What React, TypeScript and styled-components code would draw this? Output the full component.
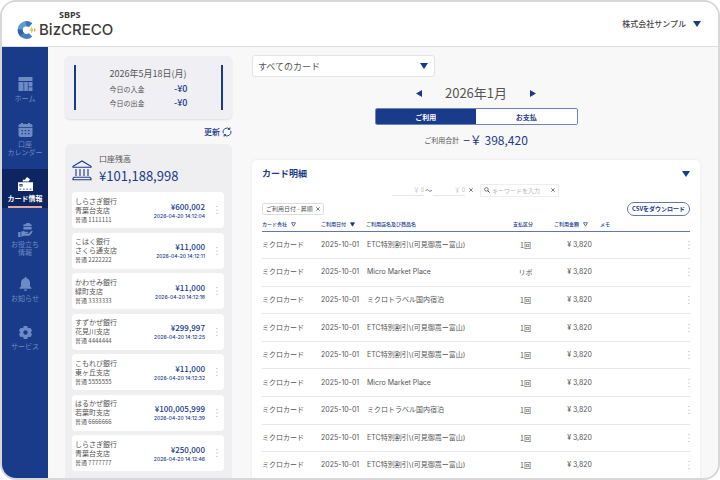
import React from "react";
import styled, { createGlobalStyle, css } from "styled-components";

const navy = "#1a3a8a";
const ink = "#555555";

const GlobalStyle = createGlobalStyle`
  * { box-sizing: border-box; }
  body { margin: 0; background: #ffffff; }
  body, button, input, select, table {
    font-family: "Noto Sans CJK JP", sans-serif;
  }
  button, input, select { margin: 0; padding: 0; border: 0; background: none; color: inherit; }
  button { cursor: pointer; }
  h1, h2, p, dl, dd, ul { margin: 0; padding: 0; }
  ul { list-style: none; }
  svg { display: block; flex: none; }
`;

const Frame = styled.div`
  display: flex;
  flex-direction: column;
  height: 100vh;
  overflow: hidden;
  border: 2px solid #d6d8d9;
  border-radius: 16px;
  background: #f8f8f8;
  color: ${ink};
`;

const Header = styled.header`
  display: flex;
  align-items: center;
  justify-content: space-between;
  flex: none;
  height: 45px;
  padding: 0 17px 0 15px;
  border-bottom: 1px solid #dcdfe0;
  background: #ffffff;
`;

const Brand = styled.a`
  display: grid;
  grid-template-columns: 20px auto;
  column-gap: 2px;
  align-items: center;
  color: #3c3a3b;
  text-decoration: none;
`;

const BrandOwner = styled.span`
  grid-column: 2;
  padding-left: 20px;
  font: 700 9px/12px "Noto Sans", sans-serif;
`;

const BrandName = styled.span`
  font: 500 15px/18px Inter, sans-serif;
`;

const CompanyButton = styled.button`
  display: flex;
  align-items: center;
  gap: 7px;
  font-size: 8px;
  line-height: 12px;
  font-weight: 500;
  color: #444444;
`;

const Body = styled.div`
  display: flex;
  flex: 1;
  min-height: 0;
`;

const Nav = styled.nav`
  display: flex;
  flex-direction: column;
  gap: 7px;
  flex: none;
  width: 46px;
  padding-top: 22px;
  background: ${navy};
`;

const NavLink = styled.a<{ $active?: boolean }>`
  display: flex;
  flex-direction: column;
  align-items: center;
  gap: 3px;
  padding: 8px 0 6px;
  color: #6f8bc6;
  font-size: 7px;
  line-height: 8px;
  text-align: center;
  text-decoration: none;
  white-space: pre-line;
  &:last-child { margin-top: 2px; }
  ${(p) =>
    p.$active &&
    css`
      padding-bottom: 0;
      background: #0d2661;
      color: #ffffff;
      font-weight: 700;
      &::after {
        content: "";
        width: 34px;
        height: 2px;
        margin-top: 1px;
        background: #e3a89b;
      }
    `}
`;

const Side = styled.aside`
  display: flex;
  flex-direction: column;
  flex: none;
  width: 167px;
  margin: 9px 0 0 17px;
`;

const TodayPanel = styled.section`
  padding: 9px;
  border-radius: 5px;
  background: #efeff4;
  box-shadow: 0 1px 2px #dedee2;
`;

const TodayInner = styled.div`
  display: flex;
  justify-content: center;
  border: solid ${navy};
  border-width: 0 2px;
`;

const TodayGrid = styled.dl`
  display: grid;
  grid-template-columns: auto auto;
  justify-content: space-between;
  align-items: center;
  width: 78px;
  font-size: 7px;
  line-height: 14px;
`;

const TodayDate = styled.dt`
  grid-column: 1 / -1;
  font-size: 9px;
  line-height: 17px;
  white-space: nowrap;
`;

const TodayValue = styled.dd`
  color: ${navy};
  font-size: 9px;
  font-weight: 500;
  text-align: right;
`;

const RefreshButton = styled.button`
  display: flex;
  align-items: center;
  align-self: flex-end;
  gap: 2px;
  height: 12px;
  margin: 7px 0 6px;
  color: ${navy};
  font-size: 8px;
  line-height: 12px;
  font-weight: 500;
`;

const BalancePanel = styled.section`
  display: flex;
  flex-direction: column;
  flex: 1;
  min-height: 0;
  padding: 8px 8px 7px 7px;
  border-radius: 5px 5px 0 0;
  background: #efeff2;
`;

const BalanceHead = styled.div`
  display: grid;
  grid-template-columns: 20px 1fr;
  align-items: end;
  column-gap: 7px;
  margin-bottom: 7px;
  > svg { margin-bottom: 4px; }
`;

const BalanceLabel = styled.h2`
  font-size: 8px;
  line-height: 14px;
  font-weight: 400;
`;

const BalanceAmount = styled.p`
  color: ${navy};
  font-size: 13px;
  line-height: 19px;
  font-weight: 400;
`;

const AccountList = styled.ul`
  display: flex;
  flex-direction: column;
  justify-content: space-between;
  flex: 1;
`;

const Account = styled.li`
  display: flex;
  align-items: center;
  height: 36px;
  padding: 0 2px 0 3px;
  border-radius: 4px;
  background: #ffffff;
`;

const AccountName = styled.div`
  flex: 1;
  font-size: 7px;
  line-height: 9px;
  white-space: nowrap;
`;

const AccountNumber = styled.div`
  font-size: 6px;
`;

const AccountFigures = styled.div`
  padding-top: 1px;
  color: ${navy};
  font-size: 8px;
  line-height: 11px;
  font-weight: 500;
  text-align: right;
`;

const AccountTime = styled.time`
  display: block;
  font: 500 5px/9px Inter, sans-serif;
`;

const MenuButton = styled.button`
  display: flex;
  align-items: center;
  justify-content: center;
  color: #a8a8a8;
`;

const AccountMenu = styled(MenuButton)`
  width: 10px;
  margin-left: 7px;
`;

const Main = styled.main`
  display: flex;
  flex-direction: column;
  flex: 1;
  min-width: 0;
  padding: 8px 18px 0 20px;
`;

const SelectBox = styled.label`
  display: grid;
  align-items: center;
  width: 183px;
  height: 22px;
  border: 1px solid #e3e4e6;
  border-radius: 3px;
  background: #ffffff;
  > * { grid-area: 1 / 1; }
  > svg { justify-self: end; margin-right: 6px; pointer-events: none; }
`;

const CardSelect = styled.select`
  width: 100%;
  height: 100%;
  padding: 0 5px;
  appearance: none;
  font-size: 9px;
`;

const MonthBar = styled.div`
  display: flex;
  align-items: center;
  align-self: center;
  justify-content: space-between;
  width: 120px;
  height: 20px;
  margin: 6px 0 5px;
  color: ${navy};
`;

const Month = styled.h1`
  color: ${ink};
  font-size: 13px;
  line-height: 20px;
  font-weight: 400;
`;

const Toggle = styled.div`
  display: grid;
  grid-template-columns: 1fr 1fr;
  align-self: center;
  width: 203px;
  height: 17px;
  overflow: hidden;
  border: 1px solid #6d83b9;
  border-radius: 2px;
  background: #ffffff;
`;

const ToggleButton = styled.button<{ $active?: boolean }>`
  background: ${(p) => (p.$active ? navy : "#ffffff")};
  color: ${(p) => (p.$active ? "#ffffff" : navy)};
  font-size: 7px;
  line-height: 12px;
  font-weight: 700;
`;

const Total = styled.p`
  display: flex;
  align-items: center;
  align-self: center;
  gap: 4px;
  margin: 5px 0 10px;
  font-size: 7px;
  line-height: 20px;
`;

const TotalValue = styled.strong`
  color: ${navy};
  font-size: 12px;
  font-weight: 400;
  white-space: nowrap;
`;

const Detail = styled.section`
  display: flex;
  flex-direction: column;
  flex: 1;
  min-height: 0;
  padding: 7px 10px 0;
  border-radius: 5px 5px 0 0;
  background: #ffffff;
  box-shadow: 0 0 3px #e4e4e4;
`;

const DetailHead = styled.div`
  display: flex;
  align-items: center;
  justify-content: space-between;
  height: 14px;
  color: ${navy};
`;

const DetailTitle = styled.h2`
  font-size: 9px;
  line-height: 14px;
  font-weight: 700;
`;

const Filters = styled.div`
  display: flex;
  align-items: center;
  justify-content: flex-end;
  gap: 1px;
  height: 14px;
  margin: 2px 131px 5px 0;
  font-size: 7px;
`;

const AmountInput = styled.input`
  width: 32px;
  height: 12px;
  border-bottom: 1px solid #e6e6e6;
  font: 6px "Noto Sans CJK JP", sans-serif;
  text-align: right;
  &::placeholder { color: #bdbdbd; opacity: 1; }
`;

const ClearButton = styled.button`
  display: flex;
  align-items: center;
  justify-content: center;
  width: 10px;
  height: 10px;
  color: #444444;
`;

const SearchBox = styled.label`
  display: flex;
  align-items: center;
  gap: 2px;
  width: 79px;
  height: 13px;
  margin-left: 3px;
  padding-left: 3px;
  border: 1px solid #eeeeee;
`;

const SearchInput = styled.input`
  flex: 1;
  min-width: 0;
  font-size: 6px;
  &::placeholder { color: #b5b5b5; opacity: 1; }
`;

const TagRow = styled.div`
  display: flex;
  align-items: center;
  justify-content: space-between;
  height: 14px;
  margin-bottom: 2px;
`;

const Tag = styled.span`
  display: flex;
  align-items: center;
  height: 12px;
  padding-left: 3px;
  border: 1px solid #dddddd;
  border-radius: 2px;
  font-size: 6px;
  line-height: 10px;
`;

const CsvButton = styled.button`
  width: 63px;
  height: 14px;
  border: 1px solid #5f76b0;
  border-radius: 7px;
  color: ${navy};
  font-size: 6px;
  line-height: 12px;
  font-weight: 700;
  white-space: nowrap;
`;

const TableArea = styled.div`
  flex: 1;
  min-height: 0;
`;

const Table = styled.table`
  width: 100%;
  height: 100%;
  border-collapse: collapse;
  table-layout: fixed;
  font: 7px/10px Inter, "Noto Sans CJK JP", sans-serif;
  tbody tr:last-child td { border-bottom: 0; }
`;

const HeadCell = styled.th<{ $width?: number }>`
  width: ${(p) => (p.$width ? `${p.$width}px` : "auto")};
  height: 13px;
  padding: 0;
  border-bottom: 1px solid #5f76b0;
  color: ${navy};
  font-size: 5px;
  font-weight: 500;
  text-align: left;
  white-space: nowrap;
`;

const HeadLabel = styled.span`
  display: flex;
  align-items: center;
  gap: 4px;
`;

const Cell = styled.td<{ $align?: "center" | "right" }>`
  padding: 0;
  border-bottom: 1px solid #e6e7e8;
  text-align: ${(p) => p.$align ?? "left"};
  white-space: nowrap;
`;

const ShopCell = styled(Cell)`
  padding-left: 1px;
`;

const KindCell = styled(Cell)`
  padding-right: 16px;
  font-family: "Noto Sans CJK JP", sans-serif;
`;

const PriceCell = styled(Cell)`
  padding-right: 8px;
`;

const RowMenu = styled(MenuButton)`
  width: 2px;
  margin-left: auto;
`;

type Direction = "down" | "left" | "right";
const trianglePaths: Record<Direction, string> = {
  down: "M0 0H8L4 6Z",
  left: "M6 0V7L0 3.5Z",
  right: "M0 0V7L6 3.5Z",
};

function Triangle({ direction = "down" }: { direction?: Direction }) {
  const wide = direction === "down";
  return (
    <svg
      width={wide ? 8 : 6}
      height={wide ? 6 : 7}
      viewBox={wide ? "0 0 8 6" : "0 0 6 7"}
      fill={navy}
      aria-hidden="true"
    >
      <path d={trianglePaths[direction]} />
    </svg>
  );
}

function SortMark({ filled }: { filled?: boolean }) {
  return (
    <svg width="5" height="5" viewBox="0 0 5 5" fill={filled ? navy : "none"} stroke={navy} strokeWidth="0.7" aria-hidden="true">
      <path d="M.5.7h4L2.5 4.2Z" />
    </svg>
  );
}

function Cross() {
  return (
    <svg width="4" height="4" viewBox="0 0 4 4" stroke="currentColor" strokeWidth="0.7" aria-hidden="true">
      <path d="M.3.3l3.4 3.4M3.7.3L.3 3.7" />
    </svg>
  );
}

function Dots() {
  return (
    <svg width="2" height="10" viewBox="0 0 2 10" fill="currentColor" aria-hidden="true">
      <circle cx="1" cy="1.5" r=".6" />
      <circle cx="1" cy="5" r=".6" />
      <circle cx="1" cy="8.5" r=".6" />
    </svg>
  );
}

function LogoMark() {
  return (
    <svg width="20" height="18" viewBox="0 0 20 18" fill="none" aria-hidden="true">
      <path d="M13.6 4.2A6.3 6.3 0 0 0 3.2 9" stroke="#5d9bd3" strokeWidth="5" />
      <path d="M3.2 8.4A6.3 6.3 0 0 0 6 14.2" stroke="#315fa8" strokeWidth="5" />
      <path d="M4.8 13.4A6.3 6.3 0 0 0 13.6 13.8" stroke="#4581c2" strokeWidth="5" />
      <path d="M9 2.7A6.3 6.3 0 0 1 13.6 4.2" stroke="#3c75b8" strokeWidth="5" />
      <path d="M14.2 5.6l2.2 3.4-2.2 3.4v-2.2L12.6 9l1.6-1.2Z" fill="#f0be43" />
      <path d="M17 7L19 9 17 11Z" fill="#e7aa3d" />
    </svg>
  );
}

function BankIcon() {
  return (
    <svg width="20" height="21" viewBox="0 0 20 21" fill="none" stroke={navy} strokeWidth="1.1" aria-hidden="true">
      <path d="M1 7.3V6.2L10 1l9 5.2v1.1ZM4 9v7M8 9v7M12 9v7M16 9v7M2 17.3h16l1 1.2v1.2H1v-1.2Z" />
    </svg>
  );
}

function RefreshIcon() {
  return (
    <svg width="10" height="10" viewBox="0 0 10 10" fill="none" stroke={navy} strokeWidth="0.9" aria-hidden="true">
      <path d="M1.2 6.3A4 4 0 0 1 7.6 2M8.8 3.7A4 4 0 0 1 2.4 8" />
      <path d="M7.9.4V2.4H5.9M2.1 9.6V7.6H4.1" />
    </svg>
  );
}

function SearchIcon() {
  return (
    <svg width="6" height="6" viewBox="0 0 6 6" fill="none" stroke="#444444" aria-hidden="true">
      <circle cx="2.4" cy="2.4" r="1.8" strokeWidth="0.7" />
      <path d="M3.7 3.7L5.6 5.6" strokeWidth="1" />
    </svg>
  );
}

const navIcons = {
  home: <path d="M.5 0h14v4H.5ZM.5 5h5v9H.5ZM6.2 5h3.6v9H6.2ZM10.5 5h4v4.4h-4ZM10.5 10.2h4V14h-4Z" />,
  calendar: (
    <path
      fillRule="evenodd"
      d="M3 0h2v1h5V0h2v1h.8a1.7 1.7 0 0 1 1.7 1.7V4H.5V2.7A1.7 1.7 0 0 1 2.2 1H3ZM.5 4.7h14v7.3a2 2 0 0 1-2 2h-10a2 2 0 0 1-2-2ZM3.5 7v1.2h1.4V7ZM6.8 7v1.2h1.4V7ZM10.1 7v1.2h1.4V7ZM3.5 10v1.2h1.4V10ZM6.8 10v1.2h1.4V10ZM10.1 10v1.2h1.4V10Z"
    />
  ),
  card: (
    <>
      <path d="M4.4 4.6l1-2 1.5.2L9 0l3 2.2-1.2 2.4Z" />
      <path
        fillRule="evenodd"
        d="M0 5.2h15V14H0ZM1.5 7v2.6h3V7ZM2.3 7.8h1.4v1H2.3ZM1.5 11.7v.7h1.8v-.7ZM4.9 11.7v.7h1.8v-.7ZM8.3 11.7v.7h1.8v-.7ZM11.7 11.7v.7h1.8v-.7Z"
      />
    </>
  ),
  support: (
    <>
      <path d="M7 1.2h1.2V0h3.6v1.2H13q.6 0 .6.6V3.2H5.4V1.8q0-.6.6-.6ZM5.4 3.9h8.2v2.7H5.4Z" />
      <path d="M.2 9h2.3v5H.2ZM3.3 8.7q2-1.500 3.700 0h2.800q.9.600 0 1.500H7.400v.6h3.200L13.200 8q1-.5 1.500.4-1.200 2.600-3.500 4.300H5.800L3.300 14Z" />
    </>
  ),
  bell: <path d="M6.7 0h1.6v1.2q3.5.8 3.7 4.5v3.5l1.5 1.7v.9h-12v-.9L3 9.2V5.7q.2-3.7 3.7-4.500ZM5.8 12.5h3.4q-.4 1.500-1.700 1.500t-1.700-1.500Z" />,
  gear: (
    <path
      fillRule="evenodd"
      d="M5.7 1h3.6l.4 1.7 1 .6 1.6-.6 1.8 3-1.2 1.2v1.2l1.2 1.2-1.8 3-1.6-.6-1 .6-.4 1.7H5.7l-.4-1.7-1-.6-1.6.6-1.8-3 1.2-1.2V6.9L.9 5.7l1.8-3 1.6.6 1-.6ZM7.5 5.3a2.2 2.2 0 1 0 0 4.4 2.2 2.2 0 0 0 0-4.4Z"
    />
  ),
};

const navItems: { icon: keyof typeof navIcons; label: string; active?: boolean }[] = [
  { icon: "home", label: "ホーム" },
  { icon: "calendar", label: "口座\nカレンダー" },
  { icon: "card", label: "カード情報", active: true },
  { icon: "support", label: "お役立ち\n情報" },
  { icon: "bell", label: "お知らせ" },
  { icon: "gear", label: "サービス" },
];

const accounts = [
  { bank: "しらさぎ銀行", branch: "青葉台支店", number: "1111111", amount: "600,002", time: "14:12:04" },
  { bank: "こはく銀行", branch: "さくら通支店", number: "2222222", amount: "11,000", time: "14:12:11" },
  { bank: "かわせみ銀行", branch: "緑町支店", number: "3333333", amount: "11,000", time: "14:12:18" },
  { bank: "すずかぜ銀行", branch: "花見川支店", number: "4444444", amount: "299,997", time: "14:12:25" },
  { bank: "こもれび銀行", branch: "東ヶ丘支店", number: "5555555", amount: "11,000", time: "14:12:32" },
  { bank: "はるかぜ銀行", branch: "若葉町支店", number: "6666666", amount: "100,005,999", time: "14:12:39" },
  { bank: "しらさぎ銀行", branch: "青葉台支店", number: "7777777", amount: "250,000", time: "14:12:46" },
];

const etc = "ETC特別割引\\(可見御嵩ー富山)";
const market = "Micro Market Place";
const travel = "ミクロトラベル国内宿泊";
const payments = [
  { shop: etc, kind: "1回" },
  { shop: market, kind: "リボ" },
  { shop: travel, kind: "1回" },
  { shop: etc, kind: "1回" },
  { shop: etc, kind: "1回" },
  { shop: market, kind: "1回" },
  { shop: travel, kind: "1回" },
  { shop: etc, kind: "1回" },
  { shop: etc, kind: "1回" },
];

export default function App() {
  return (
    <>
      <GlobalStyle />
      <Frame lang="ja">
        <Header>
          <Brand href="#">
            <BrandOwner>SBPS</BrandOwner>
            <LogoMark />
            <BrandName>BizCRECO</BrandName>
          </Brand>
          <CompanyButton type="button">
            株式会社サンプル
            <Triangle />
          </CompanyButton>
        </Header>
        <Body>
          <Nav>
            {navItems.map((item) => (
              <NavLink key={item.label} href="#" $active={item.active} aria-current={item.active ? "page" : undefined}>
                <svg width="15" height="14" viewBox="0 0 15 14" fill="currentColor" aria-hidden="true">
                  {navIcons[item.icon]}
                </svg>
                {item.label}
              </NavLink>
            ))}
          </Nav>
          <Side>
            <TodayPanel>
              <TodayInner>
                <TodayGrid>
                  <TodayDate>2026年5月18日(月)</TodayDate>
                  <dt>今日の入金</dt>
                  <TodayValue>-¥0</TodayValue>
                  <dt>今日の出金</dt>
                  <TodayValue>-¥0</TodayValue>
                </TodayGrid>
              </TodayInner>
            </TodayPanel>
            <RefreshButton type="button">
              更新
              <RefreshIcon />
            </RefreshButton>
            <BalancePanel>
              <BalanceHead>
                <BankIcon />
                <div>
                  <BalanceLabel>口座残高</BalanceLabel>
                  <BalanceAmount>¥101,188,998</BalanceAmount>
                </div>
              </BalanceHead>
              <AccountList>
                {accounts.map((a) => (
                  <Account key={a.number}>
                    <AccountName>
                      {a.bank}
                      <br />
                      {a.branch}
                      <AccountNumber>普通 {a.number}</AccountNumber>
                    </AccountName>
                    <AccountFigures>
                      ¥{a.amount}
                      <AccountTime>2026-04-20 {a.time}</AccountTime>
                    </AccountFigures>
                    <AccountMenu type="button" aria-label="口座メニュー">
                      <Dots />
                    </AccountMenu>
                  </Account>
                ))}
              </AccountList>
            </BalancePanel>
          </Side>
          <Main>
            <SelectBox>
              <CardSelect aria-label="カード">
                <option>すべてのカード</option>
              </CardSelect>
              <Triangle />
            </SelectBox>
            <MonthBar>
              <button type="button" aria-label="前の月">
                <Triangle direction="left" />
              </button>
              <Month>2026年1月</Month>
              <button type="button" aria-label="次の月">
                <Triangle direction="right" />
              </button>
            </MonthBar>
            <Toggle>
              <ToggleButton type="button" $active aria-pressed="true">ご利用</ToggleButton>
              <ToggleButton type="button" aria-pressed="false">お支払</ToggleButton>
            </Toggle>
            <Total>
              ご利用合計
              <TotalValue>−￥ 398,420</TotalValue>
            </Total>
            <Detail>
              <DetailHead>
                <DetailTitle>カード明細</DetailTitle>
                <button type="button" aria-label="明細を閉じる">
                  <Triangle />
                </button>
              </DetailHead>
              <Filters>
                <AmountInput aria-label="下限金額" placeholder="￥ 0" />
                〜
                <AmountInput aria-label="上限金額" placeholder="￥ 0" />
                <ClearButton type="button" aria-label="金額をクリア">
                  <Cross />
                </ClearButton>
                <SearchBox>
                  <SearchIcon />
                  <SearchInput aria-label="キーワード" placeholder="キーワードを入力" />
                  <ClearButton type="button" aria-label="キーワードをクリア">
                    <Cross />
                  </ClearButton>
                </SearchBox>
              </Filters>
              <TagRow>
                <Tag>
                  ご利用日付 - 昇順
                  <ClearButton type="button" aria-label="並び替えを解除">
                    <Cross />
                  </ClearButton>
                </Tag>
                <CsvButton type="button">CSVをダウンロード</CsvButton>
              </TagRow>
              <TableArea>
                <Table>
                  <thead>
                    <tr>
                      <HeadCell $width={59}>
                        <HeadLabel>カード会社<SortMark /></HeadLabel>
                      </HeadCell>
                      <HeadCell $width={45}>
                        <HeadLabel>ご利用日付<SortMark filled /></HeadLabel>
                      </HeadCell>
                      <HeadCell>ご利用店名及び商品名</HeadCell>
                      <HeadCell $width={41}>支払区分</HeadCell>
                      <HeadCell $width={46}>
                        <HeadLabel>ご利用金額<SortMark /></HeadLabel>
                      </HeadCell>
                      <HeadCell $width={90}>メモ</HeadCell>
                    </tr>
                  </thead>
                  <tbody>
                    {payments.map((p, index) => (
                      <tr key={index}>
                        <Cell>ミクロカード</Cell>
                        <Cell>2025-10-01</Cell>
                        <ShopCell>{p.shop}</ShopCell>
                        <KindCell $align="center">{p.kind}</KindCell>
                        <PriceCell $align="right">¥ 3,820</PriceCell>
                        <Cell>
                          <RowMenu type="button" aria-label="明細メニュー">
                            <Dots />
                          </RowMenu>
                        </Cell>
                      </tr>
                    ))}
                  </tbody>
                </Table>
              </TableArea>
            </Detail>
          </Main>
        </Body>
      </Frame>
    </>
  );
}
